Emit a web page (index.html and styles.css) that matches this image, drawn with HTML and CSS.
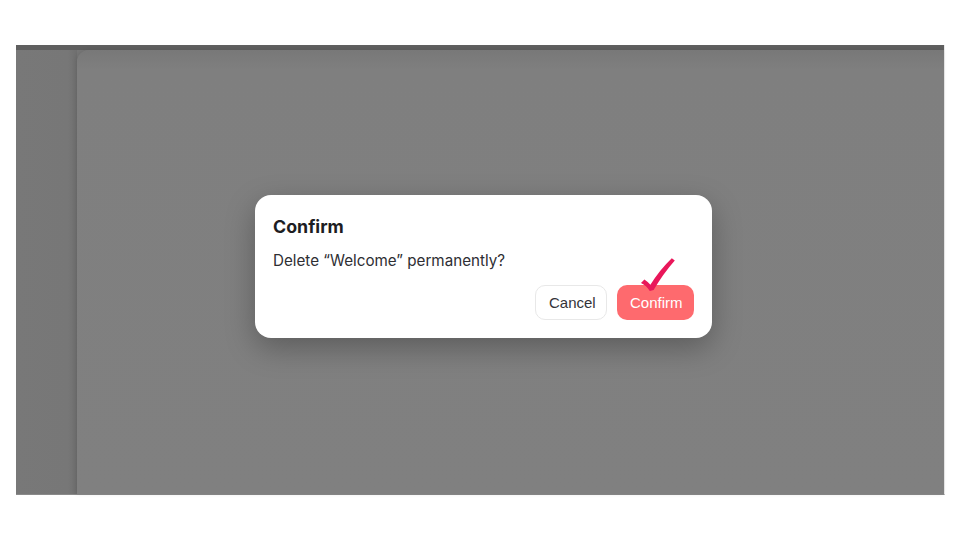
FILE: index.html
```html
<!DOCTYPE html>
<html lang="en">
<head>
<meta charset="utf-8">
<title>Confirm</title>
<link rel="stylesheet" href="styles.css">
</head>
<body>
  <div class="frame">
    <div class="topbar"></div>
    <div class="workspace">
      <div class="sidebar"></div>
      <div class="panel"></div>
    </div>
    <div class="dialog" role="dialog" aria-labelledby="dlg-title">
      <h2 class="dialog-title" id="dlg-title">Confirm</h2>
      <p class="dialog-text">Delete “Welcome” permanently?</p>
      <div class="dialog-actions">
        <button class="btn btn-cancel">Cancel</button>
        <button class="btn btn-confirm">Confirm
          <svg class="check" viewBox="0 0 40 38" width="40" height="38" aria-hidden="true">
            <path d="M3 27 L6.4 23.6 Q9.4 25.6 12.4 28.8 Q21.5 14 33.8 2.2 L36.8 4.4 Q24.8 18 15.6 34 L11.8 35 Q8.4 29.6 3 27 Z" fill="#e9175a"/>
          </svg>
        </button>
      </div>
    </div>
  </div>
</body>
</html>
```

FILE: styles.css
```css
* { box-sizing: border-box; }
html, body {
  margin: 0;
  padding: 0;
  background: #ffffff;
  width: 960px;
  height: 540px;
  overflow: hidden;
}
body {
  font-family: Inter, "Noto Sans", "Liberation Sans", sans-serif;
}
.frame {
  position: relative;
  margin: 45px 0 0 16px;
  width: 929px;
  height: 450px;
  background: #777777;
  display: flex;
  flex-direction: column;
  border-right: 1px solid #e9e9e9;
  border-bottom: 1px solid #8a8a8a;
}
.topbar {
  height: 5px;
  background: #5f5f5f;
  flex: none;
}
.workspace {
  flex: 1;
  display: flex;
}
.sidebar {
  width: 61px;
  flex: none;
  background: linear-gradient(to right, #787878 0%, #777777 85%, #6f6f6f 100%);
}
.panel {
  flex: 1;
  background: linear-gradient(to bottom, #787878 0px, #7f7f7f 20px, #808080 100%);
  border-top-left-radius: 12px;
  box-shadow: -1px 0 4px rgba(0, 0, 0, 0.10);
}
.dialog {
  position: absolute;
  left: 239px;
  top: 150px;
  width: 457px;
  height: 143px;
  background: #ffffff;
  border-radius: 16px;
  padding: 21px 18px 18px 18px;
  box-shadow: 0 10px 30px rgba(0, 0, 0, 0.28);
}
.dialog-title {
  margin: 0;
  font-size: 17.8px;
  line-height: 22px;
  font-weight: 700;
  color: #1d1d22;
}
.dialog-text {
  margin: 13px 0 0 0;
  font-size: 15.2px;
  line-height: 20px;
  color: #2e2e33;
}
.dialog-actions {
  margin-top: 14px;
  display: flex;
  justify-content: flex-end;
  gap: 10px;
}
.btn {
  position: relative;
  height: 35px;
  border-radius: 10px;
  font-family: "Liberation Sans", Arial, sans-serif;
  font-size: 15px;
  padding: 0 13px;
  cursor: pointer;
}
.btn-cancel {
  width: 72px;
  background: #ffffff;
  border: 1px solid #e8e8e8;
  color: #333338;
}
.btn-confirm {
  width: 77px;
  background: #fe6a6e;
  border: none;
  color: #ffffff;
}
.check {
  position: absolute;
  left: 21px;
  top: -29px;
  pointer-events: none;
}
```
